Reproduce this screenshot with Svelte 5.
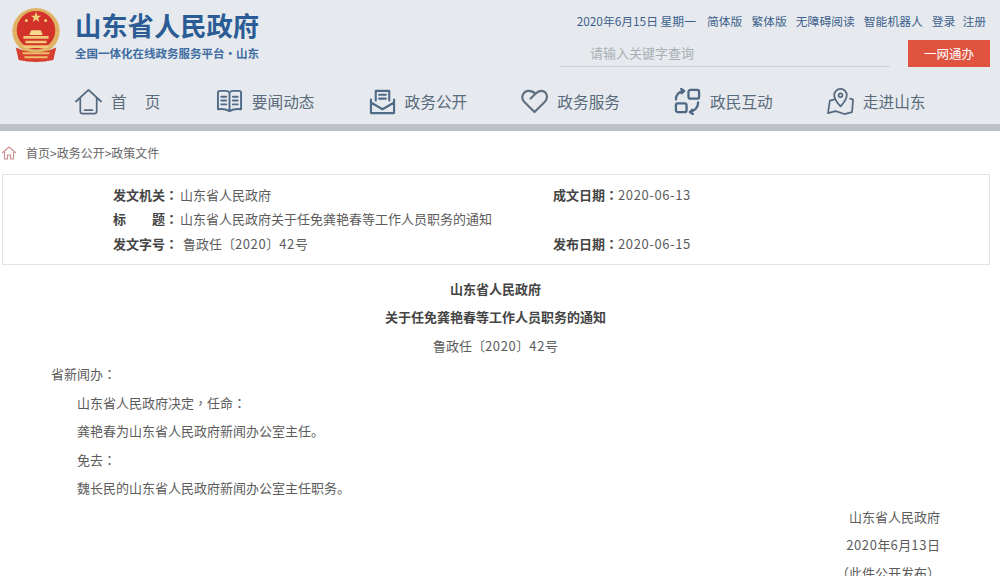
<script>
	const navItems = [
		{ label: '首　页', icon: 'home' },
		{ label: '要闻动态', icon: 'book' },
		{ label: '政务公开', icon: 'mail' },
		{ label: '政务服务', icon: 'heart' },
		{ label: '政民互动', icon: 'chat' },
		{ label: '走进山东', icon: 'map' }
	];
	const topLinks = ['简体版', '繁体版', '无障碍阅读', '智能机器人', '登录', '注册'];
</script>

<div class="page">
	<header class="header">
		<div class="top">
			<div class="brand">
				<svg class="emblem" viewBox="0 0 50 56">
					<ellipse cx="25" cy="24" rx="24.5" ry="24" fill="#e0b264" />
					<circle cx="25" cy="23" r="20" fill="#d3322a" />
					<path d="M25 4l1.4 4h4l-3.2 2.4 1.2 4-3.4-2.5-3.4 2.5 1.2-4L19.600 8h4z" fill="#f0cf7c" />
					<circle cx="15" cy="13" r="1.600" fill="#f0cf7c" />
					<circle cx="35" cy="13" r="1.600" fill="#f0cf7c" />
					<path d="M20 23h10l2 5H18z" fill="#f4d98e" />
					<path d="M12 29h26v3H12zM14 34h22v2.500H14zM12 38.500h26v3H12z" fill="#f0c878" />
					<path d="M4 41q21 10 42 0l-3 13q-18 4-36 0z" fill="#d5402f" />
					<path d="M11 46h28v2H11zM13 50h24v2H13z" fill="#eebc6a" />
				</svg>
				<div class="brand-text">
					<div class="brand-title">山东省人民政府</div>
					<div class="brand-sub">全国一体化在线政务服务平台·山东</div>
				</div>
			</div>
			<div class="tools">
				<div class="links">
					<span class="date">2020年6月15日 星期一</span>
					{#each topLinks as link}
						<span>{link}</span>
					{/each}
				</div>
				<div class="search-row">
					<div class="search">请输入关键字查询</div>
					<div class="one-net">一网通办</div>
				</div>
			</div>
		</div>
		<nav class="nav">
			{#each navItems as item}
				<div class="nav-item">
					<svg class="nav-icon" viewBox="0 0 28 28" fill="none" stroke="#55697f" stroke-width="1.8" stroke-linecap="round" stroke-linejoin="round">
						{#if item.icon === 'home'}
							<path d="M1 14 14 2l13 12M5.500 11v13q0 2.500 2.500 2.500h12q2.500 0 2.500-2.500V11M10 23h8" />
						{:else if item.icon === 'book'}
							<path d="M2 5q0-2 2-2h6q3 0 4 2 1-2 4-2h6q2 0 2 2v17q-7-1-12 2-5-3-12-2zM14 5v19M5.500 9h5M5.500 13h5M5.500 17h5M17.500 9h5M17.500 13h5M17.500 17h5" stroke-width="2" stroke="#4f6b88" />
						{:else if item.icon === 'mail'}
							<path d="M7 13V3h14v10M10.500 7h7M10.500 11h7M2 12v14h24V12M2 15l12 7 12-7" stroke-width="2.200" stroke="#4f6b88" />
						{:else if item.icon === 'heart'}
							<path d="M14 25 3 14C-1 9 3 3 8 3c3 0 5 1 7 3 2-2 4-3 6-3 5 0 8 6 4 11zM15 6l-5 5" stroke-width="2.200" stroke="#5f6f80" />
						{:else if item.icon === 'chat'}
							<path d="M2 12c0-5 3-8 8-9M7.500 1l3 2-2.500 2.500M25 15c0 5-3 8-8 10M19.500 27l-3-2 2.500-2.500" stroke-width="2.400" stroke="#4f6884" />
							<rect x="15" y="2" width="11" height="9" rx="2" stroke-width="2.400" stroke="#4f6884" />
							<rect x="2" y="16" width="11" height="9" rx="2" stroke-width="2.400" stroke="#4f6884" />
						{:else}
							<path d="M7 12 3 13 1 26l8-2 9 3 8-2 1-13-3-1M14 1C10 1 7.500 4 7.500 7.500 7.500 12 14 19 14 19s6.500-7 6.500-11.500C20.500 4 18 1 14 1z" />
							<circle cx="14" cy="7.500" r="2" />
						{/if}
					</svg>
					<span class:spaced={item.icon === 'home'}>{item.label}</span>
				</div>
			{/each}
		</nav>
	</header>
	<div class="bar"></div>

	<div class="crumb">
		<svg class="crumb-icon" viewBox="0 0 14 14" fill="none" stroke="#c98f8f" stroke-width="1.2">
			<path d="M0 7 7 1l7 6M2.500 6v7h3V9h3v4h3V6" />
		</svg>
		<span>首页&gt;政务公开&gt;政策文件</span>
	</div>

	<section class="info">
		<div class="info-row">
			<div class="info-main"><b>发文机关<span class="colon">：</span></b>山东省人民政府</div>
			<div><b>成文日期<span class="colon">：</span></b><span class="num">2020-06-13</span></div>
		</div>
		<div class="info-row">
			<div class="info-main"><b>标<i></i>题<span class="colon">：</span></b>山东省人民政府关于任免龚艳春等工作人员职务的通知</div>
		</div>
		<div class="info-row">
			<div class="info-main"><b>发文字号<span class="colon">：</span></b> 鲁政任〔<span class="num">2020</span>〕<span class="num">42</span>号</div>
			<div><b>发布日期<span class="colon">：</span></b><span class="num">2020-06-15</span></div>
		</div>
	</section>

	<article class="doc">
		<p class="center strong">山东省人民政府</p>
		<p class="center strong">关于任免龚艳春等工作人员职务的通知</p>
		<p class="center">鲁政任〔<span class="num">2020</span>〕<span class="num">42</span>号</p>
		<p class="salute">省新闻办<span class="colon">：</span></p>
		<p class="para">山东省人民政府决定<span class="colon">，</span>任命<span class="colon">：</span></p>
		<p class="para">龚艳春为山东省人民政府新闻办公室主任。</p>
		<p class="para">免去<span class="colon">：</span></p>
		<p class="para">魏长民的山东省人民政府新闻办公室主任职务。</p>
		<p class="sign">山东省人民政府</p>
		<p class="sign"><span class="num">2020</span>年<span class="num">6</span>月<span class="num">13</span>日</p>
		<p class="sign">（此件公开发布）</p>
	</article>
</div>

<style>
	:global(body) {
		background: #fff;
	}

	.page {
		height: 576px;
		overflow: hidden;
		font-family: 'Noto Sans CJK SC', 'Liberation Sans', sans-serif;
		font-size: 12px;
		color: #5c5c5c;
	}

	.header {
		height: 124px;
		background: #e6eaee;
		box-sizing: border-box;
		padding-top: 8px;
	}

	.top {
		display: flex;
		justify-content: space-between;
		height: 60px;
	}

	.brand {
		display: flex;
		gap: 14px;
		padding-left: 11px;
	}

	.emblem {
		width: 50px;
		height: 54px;
	}

	.brand-title {
		font-size: 26.3px;
		line-height: 34px;
		font-weight: 700;
		color: #2b5c96;
	}

	.brand-sub {
		margin-top: 2px;
		font-size: 11.5px;
		line-height: 18px;
		font-weight: 700;
		color: #3f6da3;
	}

	.tools {
		width: 440px;
		padding-right: 10px;
		box-sizing: border-box;
	}

	.links {
		display: flex;
		justify-content: flex-end;
		gap: 9px;
		padding-right: 4px;
		font-size: 11.8px;
		line-height: 26px;
		color: #3d5f8c;
	}

	.links .date {
		margin-right: 2px;
	}

	.links span:last-child {
		margin-left: -2px;
	}

	.search-row {
		display: flex;
		justify-content: space-between;
		margin-top: 6px;
	}

	.search {
		width: 300px;
		height: 26px;
		padding-left: 30px;
		border-bottom: 1px solid #ccd2d8;
		font-size: 13px;
		line-height: 26px;
		color: #a9aeb3;
	}

	.one-net {
		width: 82px;
		height: 27px;
		background: #e0533f;
		color: #fff;
		text-align: center;
		font-size: 12.5px;
		line-height: 27px;
	}

	.nav {
		display: flex;
		gap: 54px;
		padding-left: 75px;
		margin-top: 15px;
	}

	.nav-item {
		display: flex;
		align-items: center;
		gap: 9px;
		height: 36px;
		font-size: 15.7px;
		color: #5a6b7c;
	}

	.nav-icon {
		width: 27px;
		height: 27px;
	}

	.spaced {
		letter-spacing: 1.25px;
	}

	.bar {
		height: 7px;
		background: #bcc2c6;
	}

	.crumb {
		display: flex;
		align-items: center;
		gap: 10px;
		height: 43px;
		padding-left: 2px;
		color: #666;
	}

	.crumb-icon {
		width: 14px;
		height: 14px;
	}

	.info {
		margin: 0 10px 0 2px;
		height: 91px;
		box-sizing: border-box;
		border: 1px solid #e2e2e2;
		padding-top: 7.5px;
		font-size: 13px;
	}

	.info-row {
		display: flex;
		height: 24.5px;
		line-height: 24.5px;
		padding-left: 110px;
	}

	.info-main {
		width: 440px;
	}

	.info-main .colon {
		margin-right: 2px;
	}

	.info b {
		color: #444;
	}

	.info i {
		display: inline-block;
		width: 26px;
	}

	.colon {
		font-family: 'Noto Sans CJK TC', sans-serif;
	}

	.num {
		letter-spacing: 0.6px;
	}

	.doc {
		padding-top: 10px;
		font-size: 13px;
	}

	.doc p {
		margin: 0;
		height: 28.45px;
		line-height: 28.45px;
	}

	.center {
		text-align: center;
		padding-right: 9px;
	}

	.strong {
		font-weight: 700;
		color: #444;
	}

	.salute {
		padding-left: 51px;
	}

	.para {
		padding-left: 77px;
	}

	.sign {
		text-align: right;
		padding-right: 60px;
	}
</style>
